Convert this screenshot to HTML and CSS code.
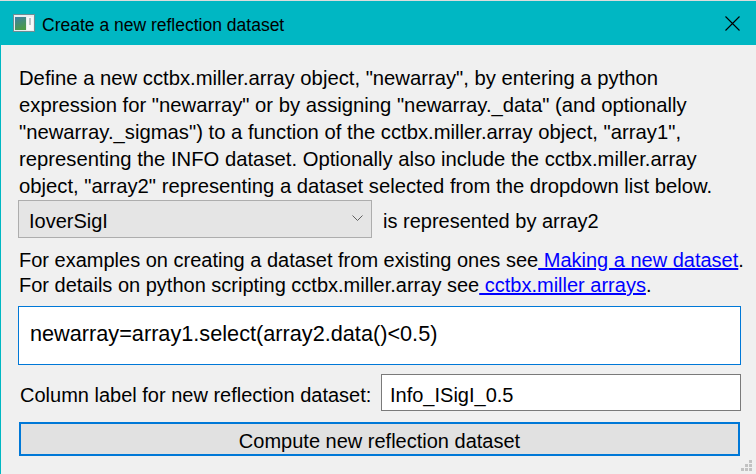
FILE: index.html
```html
<!DOCTYPE html>
<html>
<head>
<meta charset="utf-8">
<title>Create a new reflection dataset</title>
<link rel="stylesheet" href="styles.css">
</head>
<body>
<div class="strip"></div>
<div class="window">
  <div class="titlebar">
    <svg class="appicon" width="22" height="18" viewBox="0 0 22 18">
      <defs>
        <linearGradient id="g1" x1="0" y1="0" x2="0.4" y2="1">
          <stop offset="0" stop-color="#3d7fa8"/>
          <stop offset="1" stop-color="#4b9a4a"/>
        </linearGradient>
      </defs>
      <rect x="0.5" y="0.5" width="21" height="17" fill="#e9eef0" stroke="#6f8c93"/>
      <rect x="2" y="3" width="11" height="13" fill="url(#g1)"/>
      <rect x="14" y="3" width="6" height="13" fill="#f7f9f9"/>
      <rect x="16" y="4" width="2" height="7" fill="#b9c3c6"/>
    </svg>
    <span class="title">Create a new reflection dataset</span>
    <svg class="close" width="15" height="15" viewBox="0 0 15 15">
      <path d="M0.5 0.5 L14.5 14.5 M14.5 0.5 L0.5 14.5" stroke="#000" stroke-width="1.1" fill="none"/>
    </svg>
  </div>
  <div class="content">
    <p class="intro">Define a new cctbx.miller.array object, "newarray", by entering a python<br>expression for "newarray" or by assigning "newarray._data" (and optionally<br>"newarray._sigmas") to a function of the cctbx.miller.array object, "array1",<br>representing the INFO dataset. Optionally also include the cctbx.miller.array<br>object, "array2" representing a dataset selected from the dropdown list below.</p>
    <div class="comborow">
      <div class="combo">
        <span class="combotext">IoverSigI</span>
        <svg class="chev" width="11" height="6" viewBox="0 0 11 6">
          <path d="M0.5 0.5 L5.5 5.5 L10.5 0.5" stroke="#5f5f5f" stroke-width="1" fill="none"/>
        </svg>
      </div>
      <span class="combolabel">is represented by array2</span>
    </div>
    <p class="links">For examples on creating a dataset from existing ones see<a href="#"> Making a new dataset</a>.<br>For details on python scripting cctbx.miller.array see<a href="#"> cctbx.miller arrays</a>.</p>
    <div class="textedit">newarray=array1.select(array2.data()&lt;0.5)</div>
    <div class="labelrow">
      <span class="collabel">Column label for new reflection dataset:</span>
      <div class="lineedit">Info_ISigI_0.5</div>
    </div>
    <div class="button">Compute new reflection dataset</div>
  </div>
  <svg class="grip" width="12" height="12" viewBox="0 0 12 12">
    <rect x="8" y="0" width="3" height="3" fill="#c2c2c2"/>
    <rect x="4" y="4" width="3" height="3" fill="#c2c2c2"/>
    <rect x="8" y="4" width="3" height="3" fill="#c2c2c2"/>
    <rect x="0" y="8" width="3" height="3" fill="#c2c2c2"/>
    <rect x="4" y="8" width="3" height="3" fill="#c2c2c2"/>
    <rect x="8" y="8" width="3" height="3" fill="#c2c2c2"/>
  </svg>
</div>
</body>
</html>
```
FILE: styles.css
```css
* { box-sizing: border-box; }
html, body {
  margin: 0;
  padding: 0;
  width: 756px;
  height: 474px;
  overflow: hidden;
  background: #f0f0f0;
  font-family: "Liberation Sans", Arial, sans-serif;
  color: #000;
}
.strip {
  height: 1px;
  background: #dcdcdc;
}
.window {
  position: relative;
  height: 473px;
  border-left: 1px solid #00b7c3;
  background: #f0f0f0;
  display: flex;
  flex-direction: column;
}
.titlebar {
  height: 44px;
  background: #00b7c3;
  display: flex;
  align-items: center;
  padding-left: 12px;
  padding-right: 16px;
}
.appicon { flex: none; }
.title {
  margin-left: 7px;
  font-size: 17.5px;
  padding-top: 4px;
  white-space: nowrap;
}
.close {
  margin-left: auto;
  flex: none;
  margin-top: 1px;
}
.content {
  padding: 20px 15px 0 17px;
  font-size: 20px;
}
.intro {
  margin: 0 0 0 1px;
  font-size: 20.25px;
  line-height: 27px;
  white-space: nowrap;
}
.comborow {
  display: flex;
  align-items: center;
  gap: 11px;
}
.combo {
  width: 354px;
  height: 38px;
  background: #e5e5e5;
  border: 1px solid #adadad;
  display: flex;
  align-items: center;
  padding: 4px 8px 0 10px;
}
.combotext { flex: 1; }
.chev { flex: none; margin-top: -6px; }
.combolabel {
  padding-top: 4px;
  white-space: nowrap;
}
.links {
  margin: 10px 0 0 1px;
  line-height: 25px;
  white-space: nowrap;
}
.links a {
  color: #0000ff;
  text-decoration: underline;
}
.textedit {
  margin-top: 8px;
  height: 59px;
  background: #fff;
  border: 1px solid #0078d7;
  padding: 14px 11px 0 11px;
  font-size: 21.7px;
  white-space: nowrap;
}
.labelrow {
  margin-top: 9px;
  display: flex;
  align-items: center;
}
.collabel {
  flex: 1;
  padding: 5px 0 0 2px;
  white-space: nowrap;
}
.lineedit {
  width: 360px;
  height: 37px;
  background: #fff;
  border: 1px solid #7a7a7a;
  display: flex;
  align-items: center;
  padding: 5px 8px 0 8px;
}
.button {
  margin: 11px 1px 0 1px;
  height: 34px;
  background: #e1e1e1;
  border: 2px solid #0078d7;
  display: flex;
  align-items: center;
  justify-content: center;
  padding-top: 4px;
}
.grip {
  position: absolute;
  right: 3px;
  bottom: 2px;
}
```
